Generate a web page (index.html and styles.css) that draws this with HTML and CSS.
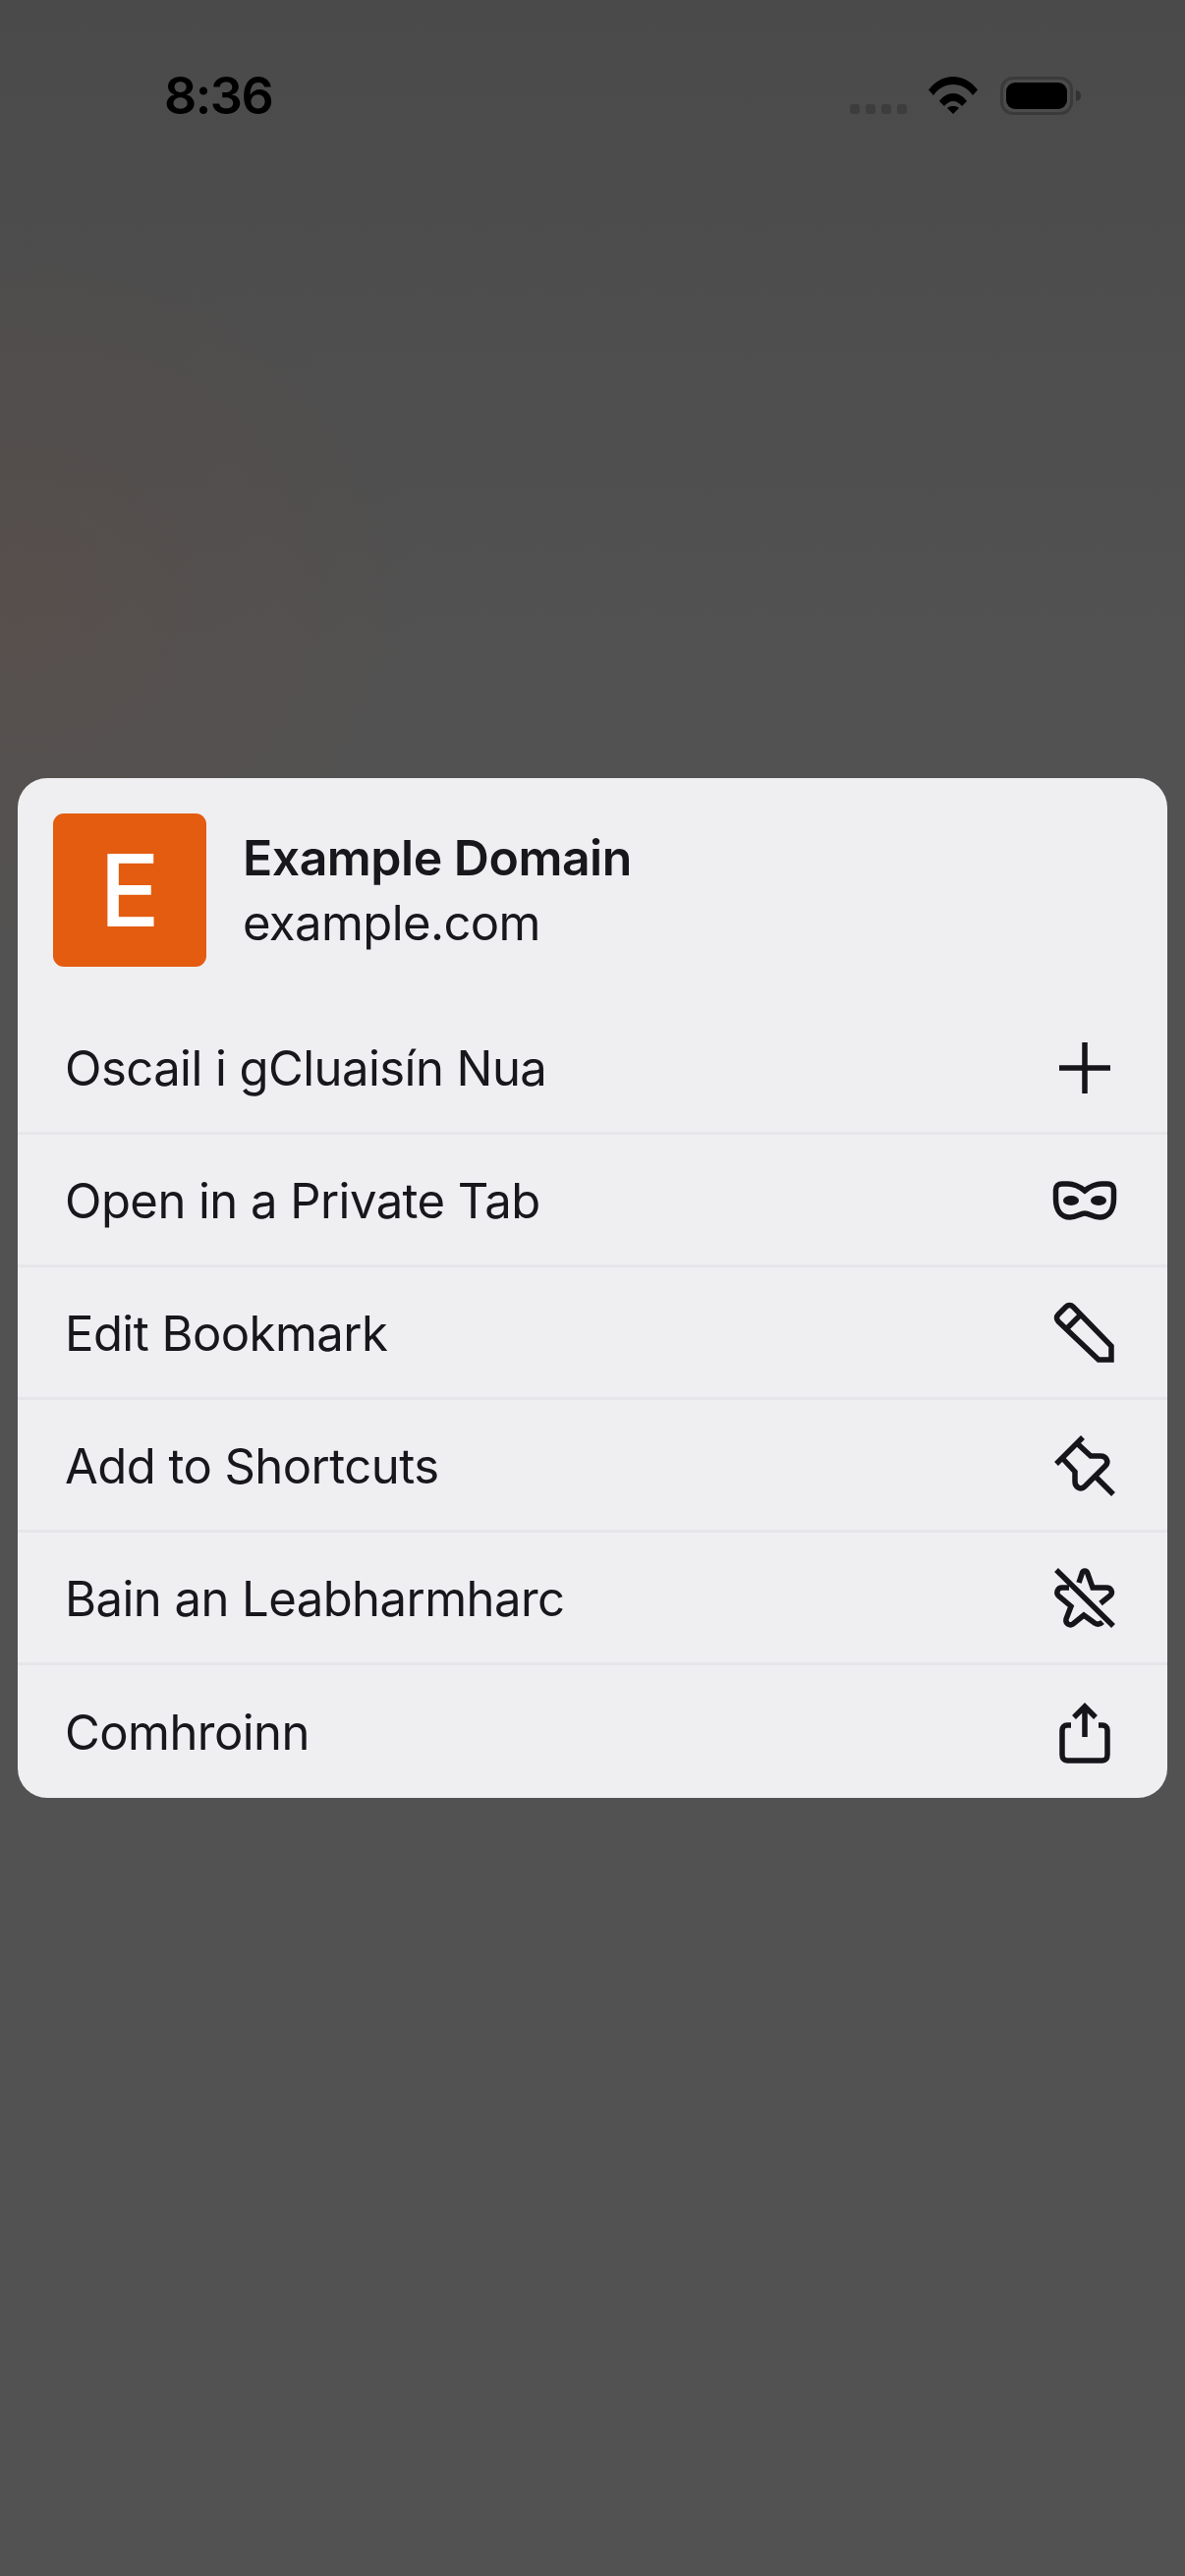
FILE: index.html
```html
<!DOCTYPE html>
<html>
<head>
<meta charset="utf-8">
<title>Example Domain menu</title>
<link rel="stylesheet" href="styles.css">
</head>
<body>

<div class="status">
	<div class="time">8:36</div>
	<div class="status-right">
		<div class="dots"><i></i><i></i><i></i><i></i></div>
		<svg class="wifi" width="50" height="38" viewBox="0 0 50 38">
			<path d="M0 13.500C6.500 5 15.500 0 25 0s18.500 5 25 13.500l-5 5.500C39.500 11.500 33 8 25 8S10.500 11.500 5 19z"/>
			<path d="M11 25C14.500 20 19.500 17 25 17s10.500 3 14 8l-5 5C31.500 27 28.500 25 25 25s-6.500 2-9 5z"/>
			<path d="M19 32C20.500 30.500 22.500 30 25 30s4.500 .5 6 2L25 38z"/>
		</svg>
		<div class="battery"><div class="battery-fill"></div></div>
		<div class="battery-nub"></div>
	</div>
</div>

<div class="card">
	<div class="head">
		<div class="favicon">E</div>
		<div class="head-text">
			<div class="title">Example Domain</div>
			<div class="url">example.com</div>
		</div>
	</div>

	<div class="row">
		<span>Oscail i gCluaisín Nua</span>
		<svg class="icon" viewBox="0 0 64 64"><path d="M32 6V58M6 32H58"/></svg>
	</div>
	<div class="row">
		<span>Open in a Private Tab</span>
		<svg class="icon" viewBox="0 0 64 64">
			<path d="M32 22C27 18 22 15 15 15H9C5 15 2.500 17 2.500 21V30C2.500 42 8 49 17 49C24 49 27 45 32 45C37 45 40 49 47 49C56 49 61.500 42 61.500 30V21C61.500 17 59 15 55 15H49C42 15 37 18 32 22Z"/>
			<ellipse class="solid" cx="18" cy="32" rx="8" ry="5"/>
			<ellipse class="solid" cx="46" cy="32" rx="8" ry="5"/>
		</svg>
	</div>
	<div class="row">
		<span>Edit Bookmark</span>
		<svg class="icon" viewBox="0 0 64 64"><path d="M5 13L13 5C15 3 18 3 20 5L59 45V59H46L5 20C3 18 3 15 5 13ZM28 13L14 27"/></svg>
	</div>
	<div class="row">
		<span>Add to Shortcuts</span>
		<svg class="icon" viewBox="0 0 64 64"><path d="M30 3L3 30M24 9L38 22H48C54 22 57 28 53 32L32 53C28 57 22 54 22 48V38L9 24M43 43L61 61"/></svg>
	</div>
	<div class="row">
		<span>Bain an Leabharmharc</span>
		<svg class="icon" viewBox="0 0 64 64"><path d="M3 3L61 60M26 16L29 7C30 3 34 3 35 7L40 21H54C59 21 61 26 58 29L48 37M16 21H9C4 21 2 27 6 30L18 40L13 53C12 58 17 60 20 58L31 49L42 57C45 59 48 58 50 56"/></svg>
	</div>
	<div class="row">
		<span>Comhroinn</span>
		<svg class="icon" viewBox="0 0 64 64"><path d="M18 24H14C11 24 9 26 9 29V54C9 58 11 60 14 60H50C53 60 55 58 55 54V29C55 26 53 24 50 24H46M32 36V6M21 16L32 5L43 16"/></svg>
	</div>
</div>

</body>
</html>
```

FILE: styles.css
```css
html { height: 100%; }
body {
	margin: 0;
	width: 1206px;
	height: 2622px;
	overflow: hidden;
	font-family: Inter, "Noto Sans", sans-serif;
	color: #17171c;
	background:
		radial-gradient(ellipse 420px 380px at 20px 610px, rgba(110, 70, 55, 0.2), rgba(110, 70, 55, 0)),
		linear-gradient(#4a4a4a, #525252 700px);
}

/* status bar */
.status { display: flex; justify-content: space-between; align-items: flex-start; padding: 78px 106px 0 167px; height: 40px; }
.time { font-size: 52px; line-height: 40px; font-weight: 600; letter-spacing: -1.5px; color: #000; }
.status-right { display: flex; align-items: flex-start; }
.dots { display: flex; gap: 6px; margin: 28px 22px 0 0; }
.dots i { width: 10px; height: 10px; border-radius: 3px; background: #3d3d3d; }
.wifi { fill: #000; margin-right: 23px; }
.battery { width: 74px; height: 39px; box-sizing: border-box; padding: 3px; border: 3px solid #3a3a3a; border-radius: 13px; }
.battery-fill { height: 100%; background: #000; border-radius: 9px; }
.battery-nub { width: 5px; height: 11px; margin: 14px 0 0 3px; background: #333; border-radius: 0 5px 5px 0; }

/* menu */
.card { margin: 674px 18px 0; background: #efeff1; border-radius: 30px; overflow: hidden; }
.head { display: flex; align-items: center; gap: 37px; padding: 36px 36px 36px; }
.head-text { padding-top: 2px; }
.favicon {
	width: 156px;
	height: 156px;
	border-radius: 11px;
	background: #e35c10;
	color: #fff;
	font-size: 102px;
	font-weight: 500;
	line-height: 156px;
	text-align: center;
}
.title { font-size: 50px; line-height: 66px; font-weight: 600; letter-spacing: -0.5px; }
.url { font-size: 49px; line-height: 68px; letter-spacing: -0.6px; }
.row {
	display: flex;
	justify-content: space-between;
	align-items: center;
	height: 130px;
	padding: 2px 52px 0 48px;
	border-bottom: 3px solid #e6e6ea;
	font-size: 49px;
	letter-spacing: -0.55px;
}
.row:last-child { border-bottom: 0; height: 133px; }
.icon { width: 64px; height: 64px; fill: none; stroke: #15151a; stroke-width: 5.5; overflow: visible; }
.icon .solid { fill: #15151a; stroke: none; }
```
